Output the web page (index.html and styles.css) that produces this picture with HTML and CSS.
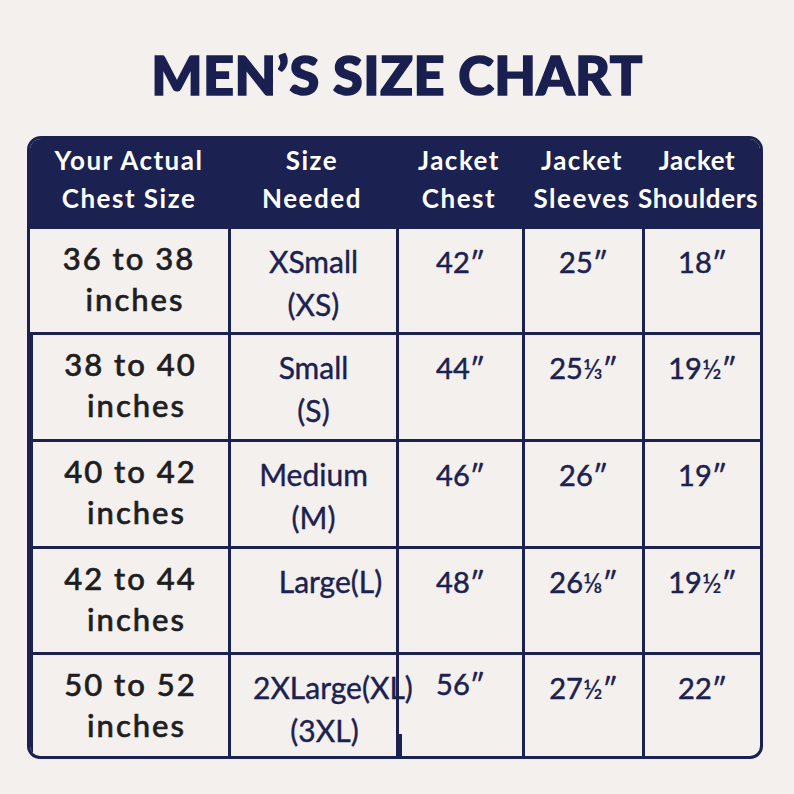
FILE: index.html
```html
<!DOCTYPE html>
<html lang="en">
<head>
<meta charset="utf-8">
<title>Men's Size Chart</title>
<link rel="stylesheet" href="styles.css">
</head>
<body>
<h1 class="title">MEN’S SIZE CHART</h1>
<div class="chart">
  <div class="hd">Your Actual<br>Chest Size</div>
  <div class="hd">Size<br>Needed</div>
  <div class="hd">Jacket<br>Chest</div>
  <div class="hd">Jacket<br>Sleeves</div>
  <div class="hd hd-last">Jacket<br>Shoulders</div>

  <div class="cell chest">36 to 38<br><span class="in">inches</span></div>
  <div class="cell size">XSmall<br>(XS)</div>
  <div class="cell val">42″</div>
  <div class="cell val">25″</div>
  <div class="cell val">18″</div>

  <div class="cell chest">38 to 40<br><span class="in">inches</span></div>
  <div class="cell size">Small<br>(S)</div>
  <div class="cell val">44″</div>
  <div class="cell val">25<span class="frac">⅓</span>″</div>
  <div class="cell val">19<span class="frac">½</span>″</div>

  <div class="cell chest">40 to 42<br><span class="in">inches</span></div>
  <div class="cell size">Medium<br>(M)</div>
  <div class="cell val">46″</div>
  <div class="cell val">26″</div>
  <div class="cell val">19″</div>

  <div class="cell chest">42 to 44<br><span class="in">inches</span></div>
  <div class="cell size size-large">Large(L)</div>
  <div class="cell val">48″</div>
  <div class="cell val">26<span class="frac">⅛</span>″</div>
  <div class="cell val">19<span class="frac">½</span>″</div>

  <div class="cell chest">50 to 52<br><span class="in">inches</span></div>
  <div class="cell size size-2xl">2XLarge(XL)<br>(3XL)</div>
  <div class="cell val val-open">56″</div>
  <div class="cell val">27<span class="frac">½</span>″</div>
  <div class="cell val">22″</div>
</div>
</body>
</html>
```

FILE: styles.css
```css
html, body {
  margin: 0;
  padding: 0;
  background: #f3f0ee;
}

body {
  font-family: Lato, "Open Sans", "DejaVu Sans", sans-serif;
  color: #1b2150;
}

.title {
  margin: 43px 0 29px;
  font-size: 54px;
  line-height: 64px;
  font-weight: 900;
  text-align: center;
  color: #19204f;
  letter-spacing: 0.5px;
  -webkit-text-stroke: 1.6px #19204f;
}

.chart {
  margin-left: 27px;
  width: 730px;
  border: 3px solid #1b2150;
  border-radius: 14px 14px 13px 13px;
  overflow: hidden;
  display: grid;
  grid-template-columns: 198px 168px 126px 120px 118px;
  grid-template-rows: 87px 106px 107px 107px 106px 104px;
}

.hd {
  background: #1b2150;
  color: #ffffff;
  font-weight: 700;
  font-size: 26px;
  letter-spacing: 1.5px;
  line-height: 38px;
  padding-top: 2px;
  text-align: center;
  white-space: nowrap;
}

.hd-last {
  letter-spacing: 0.6px;
  padding-right: 4px;
  margin-left: -4px;
}

.cell {
  border-top: 3px solid #1b2150;
  text-align: center;
  white-space: nowrap;
  position: relative;
}

.cell + .cell {
  border-left: 3px solid #1b2150;
}

.chest {
  color: #1e1e22;
  font-size: 31px;
  font-weight: 500;
  letter-spacing: 2px;
  line-height: 41px;
  padding-top: 9px;
  -webkit-text-stroke: 0.6px #1e1e22;
}

.chest .in {
  padding-left: 12px;
}

.size {
  font-size: 30px;
  line-height: 43px;
  padding-top: 11px;
  color: #1b2150;
  -webkit-text-stroke: 0.4px #1b2150;
}

.size-large {
  padding-left: 34px;
}

.size-2xl {
  padding-left: 22px;
}

.val {
  font-size: 29px;
  line-height: 42px;
  padding-top: 12px;
  color: #1b2150;
  -webkit-text-stroke: 0.5px #1b2150;
}

.val-open {
  border-left: none;
  padding-top: 8px;
}

.val-open::before {
  content: "";
  position: absolute;
  left: 0;
  bottom: 0;
  width: 3px;
  height: 22px;
  background: #1b2150;
}

.frac {
  font-size: 27px;
  -webkit-text-stroke: 0.2px #1b2150;
}
```
